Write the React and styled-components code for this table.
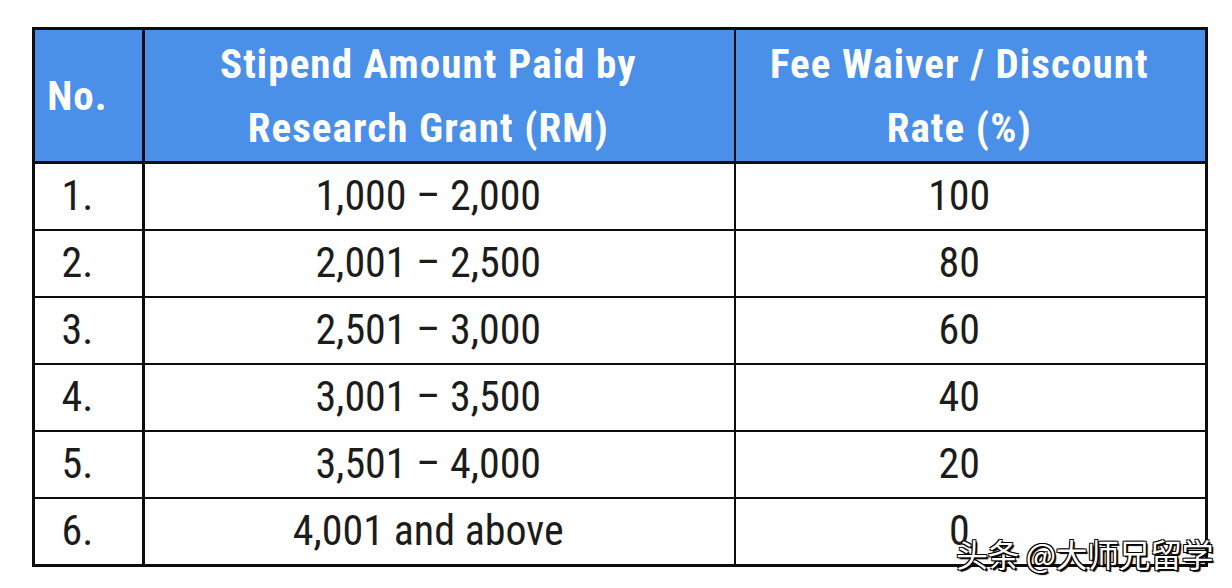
import React from "react";
import styled, { createGlobalStyle } from "styled-components";

const Global = createGlobalStyle`
  html, body { margin: 0; padding: 0; background: #fefefe; }
  body { font-family: "Roboto Condensed", Roboto, "Liberation Sans", sans-serif; }
`;

const Page = styled.div`
  position: relative;
  width: 1232px;
  height: 588px;
  padding: 27px 0 0 32px;
  box-sizing: border-box;
`;

const Table = styled.table`
  border-collapse: collapse;
  width: 1173px;
  table-layout: fixed;
  border: 3px solid #0d0d0d;
`;

const HeadCell = styled.th`
  background: #4a8fe8;
  color: #ffffff;
  font-weight: 700;
  font-size: 41px;
  line-height: 64px;
  height: 131px;
  padding: 0 22px 0 0;
  text-align: center;
  vertical-align: middle;
  border-right: ${(p) => p.$thick ? "3px" : "2px"} solid #0d0d0d;
  border-bottom: 3px solid #0d0d0d;
  letter-spacing: 1.1px;
`;

const Cell = styled.td`
  color: #1c1c1c;
  font-size: 42px;
  font-weight: 400;
  height: 63px;
  padding: 0 22px 2px 0;
  text-align: center;
  vertical-align: middle;
  border-right: ${(p) => p.$thick ? "3px" : "2px"} solid #0d0d0d;
  border-bottom: 2px solid #0d0d0d;
  background: #ffffff;
`;

const Watermark = styled.div`
  position: absolute;
  left: 956px;
  top: 531px;
  font-family: "Noto Sans CJK SC", sans-serif;
  font-size: 32px;
  line-height: 44px;
  color: #ffffff;
  letter-spacing: -0.5px;
  text-shadow: 1px 1px 0 #000, -1px 1px 0 #000, 1px -1px 0 #000, -1px -1px 0 #000, 2px 2px 1px #000;
  white-space: nowrap;
`;

const rows = [
  ["1.", "1,000 – 2,000", "100"],
  ["2.", "2,001 – 2,500", "80"],
  ["3.", "2,501 – 3,000", "60"],
  ["4.", "3,001 – 3,500", "40"],
  ["5.", "3,501 – 4,000", "20"],
  ["6.", "4,001 and above", "0"],
];

export default function App() {
  return (
    <>
      <Global />
      <Page>
        <Table>
          <colgroup>
            <col style={{ width: 110 }} />
            <col style={{ width: 591 }} />
            <col style={{ width: 472 }} />
          </colgroup>
          <thead>
            <tr>
              <HeadCell $thick>No.</HeadCell>
              <HeadCell>Stipend Amount Paid by<br />Research Grant (RM)</HeadCell>
              <HeadCell>Fee Waiver / Discount<br />Rate (%)</HeadCell>
            </tr>
          </thead>
          <tbody>
            {rows.map((r) => (
              <tr key={r[0]}>
                <Cell $thick>{r[0]}</Cell>
                <Cell>{r[1]}</Cell>
                <Cell>{r[2]}</Cell>
              </tr>
            ))}
          </tbody>
        </Table>
        <Watermark>头条 @大师兄留学</Watermark>
      </Page>
    </>
  );
}
